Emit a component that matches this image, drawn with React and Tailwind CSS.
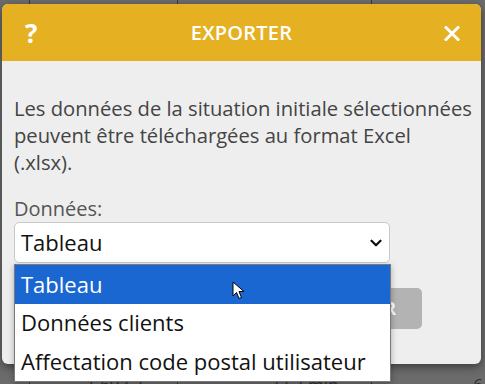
import { ChevronDown } from 'lucide-react';

const options = ['Tableau', 'Données clients', 'Affectation code postal utilisateur'];

const App = () => {
  return (
    <div className="relative w-[485px] h-[384px] overflow-hidden bg-[#6b6b6b] font-['Open_Sans',sans-serif]">
      {/* page behind the overlay */}
      <div className="flex h-full text-[17px] text-[#2e2e2e] whitespace-nowrap">
        <div className="w-[30px] border-r border-[#3a3a3a]" />
        <div className="w-[148px] border-r border-[#3a3a3a] flex flex-col justify-end overflow-hidden">
          <div className="pl-[56px] leading-[14px] h-[6px]">1 693 7</div>
        </div>
        <div className="w-[194px] border-r border-[#3a3a3a] flex flex-col justify-end overflow-hidden">
          <div className="pl-[92px] leading-[14px] h-[6px]">77.7 min</div>
        </div>
        <div className="flex-1 flex flex-col justify-end items-end pr-[2px]">
          <div className="leading-[14px] h-[6px]">6</div>
        </div>
      </div>

      {/* modal */}
      <div className="absolute left-[2px] top-[4px] w-[479px] h-[360px] rounded-[6px] bg-[#eeeeee] shadow-[0_3px_8px_rgba(0,0,0,0.45)] overflow-hidden">
        <div className="h-[57px] bg-[#e5b022] flex items-center justify-between pl-[23px] pr-[21px] text-white">
          <span className="text-[26px] font-bold leading-none w-[14px] mt-[1px]">?</span>
          <span className="text-[20px] font-semibold tracking-[0.2px]">EXPORTER</span>
          <svg width="16" height="15" viewBox="0 0 16 15" className="mt-[1px]">
            <path d="M2 1.5 L14 13.5 M14 1.5 L2 13.5" stroke="white" strokeWidth="3" strokeLinecap="square" />
          </svg>
        </div>
        <div className="pl-[12px] pr-[6px] pt-[34px]">
          <p className="text-[20.2px] leading-[27px] text-[#444444] mb-[20px]">
            Les données de la situation initiale sélectionnées peuvent être téléchargées au format Excel
            <br />
            (.xlsx).
          </p>
          <div className="text-[20px] leading-[25px] text-[#555555] mb-[1px]">Données:</div>
          <div className="w-[376px] h-[41px] bg-white border border-[#c9c9c9] rounded-[5px] flex items-center justify-between pl-[6px] pr-[4px]">
            <span className="text-[22px] text-[#111111]">Tableau</span>
            <ChevronDown className="w-[18px] h-[18px] text-[#111111]" strokeWidth={3} />
          </div>
          <div className="flex justify-end pr-[53px] mt-[25px]">
            <button className="h-[41px] px-[26px] rounded-[5px] bg-[#b3b3b3] text-white text-[17px] font-bold">
              EXPORTER
            </button>
          </div>
        </div>
      </div>

      {/* open select list */}
      <div className="absolute left-[14px] top-[264px] w-[377px] bg-white border border-[#7a7a7a] shadow-[0_2px_6px_rgba(0,0,0,0.3)]">
        {options.map((opt, i) => (
          <div
            key={opt}
            className={`h-[38.5px] flex items-center pl-[6px] text-[22px] ${i === 0 ? 'bg-[#1a67d2] text-white' : 'text-[#111111]'}`}
          >
            {opt}
          </div>
        ))}
      </div>

      {/* mouse cursor */}
      <svg className="absolute left-[232px] top-[281px]" width="13" height="19" viewBox="0 0 13 19">
        <path d="M1 1 L1 15 L4.5 11.5 L7 17.5 L9.5 16.5 L7 10.5 L12 10.5 Z" fill="white" stroke="black" strokeWidth="1" strokeLinejoin="round" />
      </svg>
    </div>
  );
};

export default App;
